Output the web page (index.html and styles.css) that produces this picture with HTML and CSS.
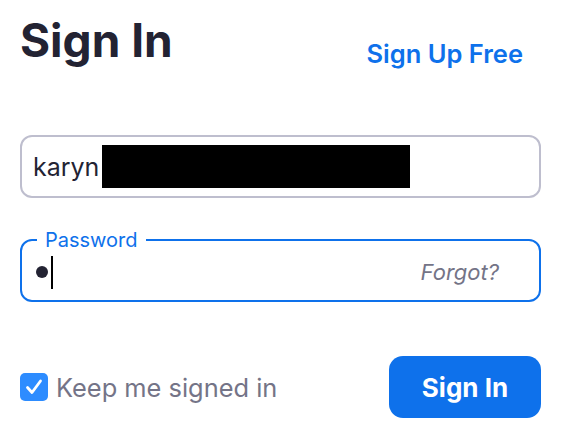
FILE: index.html
```html
<!DOCTYPE html>
<html lang="en">
<head>
    <meta charset="UTF-8">
    <meta name="viewport" content="width=device-width, initial-scale=1.0">
    <title>Sign In</title>
    <link rel="stylesheet" href="styles.css">
</head>
<body>

    <div class="signin">
        <div class="signin-header">
            <h1>Sign In</h1>
            <a href="#" class="signup-link">Sign Up Free</a>
        </div>

        <div class="text-field">
            <span class="field-value">karyn</span><span class="redacted"></span>
        </div>

        <fieldset class="password-field">
            <legend>Password</legend>
            <div class="password-row">
                <span class="pw-dot"></span><span class="caret"></span>
                <a href="#" class="forgot-link">Forgot?</a>
            </div>
        </fieldset>

        <div class="signin-footer">
            <label class="keep-signed">
                <span class="checkbox">
                    <svg width="20" height="20" viewBox="0 0 20 20">
                        <path d="M3.5 10.5 L8 15.5 L16.5 4" fill="none" stroke="#fff" stroke-width="2.8" stroke-linecap="round" stroke-linejoin="round"/>
                    </svg>
                </span>
                Keep me signed in
            </label>
            <button class="signin-btn">Sign In</button>
        </div>
    </div>

</body>
</html>
```

FILE: styles.css
```css
body{
    margin: 0;
    background: #fff;
    font-family: Inter, "Noto Sans", sans-serif;
}
.signin{
    width: 521px;
    padding: 12px 0 0 20px;
}
.signin-header{
    display: flex;
    justify-content: space-between;
    align-items: flex-start;
}
.signin-header h1{
    margin: 0;
    font-size: 46px;
    line-height: 56px;
    font-weight: 700;
    color: #232333;
}
.signup-link{
    margin-top: 27px;
    margin-right: 18px;
    font-size: 25.5px;
    line-height: 30px;
    font-weight: 600;
    color: #0E71EB;
    text-decoration: none;
}

.text-field{
    box-sizing: border-box;
    height: 63px;
    margin-top: 66px;
    padding: 0 11px;
    border: 2px solid #BEBECE;
    border-radius: 12px;
    display: flex;
    align-items: center;
    font-size: 25px;
    color: #232333;
}
.redacted{
    display: inline-block;
    width: 308px;
    height: 43px;
    margin-left: 3px;
    background: #000;
}

.password-field{
    margin: 32px 0 0;
    padding: 0 40px 6px 14px;
    border: 2px solid #0E71EB;
    border-radius: 12px;
}
.password-field legend{
    margin-left: 1px;
    padding: 0 8px;
    font-size: 20px;
    line-height: 20px;
    color: #0E71EB;
}
.password-row{
    height: 44px;
    display: flex;
    align-items: center;
}
.pw-dot{
    width: 12px;
    height: 12px;
    border-radius: 50%;
    background: #232333;
}
.caret{
    width: 2px;
    height: 33px;
    margin-left: 3px;
    background: #000;
}
.forgot-link{
    margin-left: auto;
    font-size: 22px;
    font-style: italic;
    color: #747487;
    text-decoration: none;
}

.signin-footer{
    margin-top: 54px;
    display: flex;
    justify-content: space-between;
    align-items: center;
}
.keep-signed{
    display: flex;
    align-items: center;
    gap: 8px;
    font-size: 25.4px;
    color: #747487;
}
.checkbox{
    width: 28px;
    height: 28px;
    border-radius: 5px;
    background: #2D8CFF;
    display: flex;
    align-items: center;
    justify-content: center;
}
.signin-btn{
    width: 152px;
    height: 62px;
    border: none;
    border-radius: 14px;
    background: #0E71EB;
    color: #fff;
    font-family: Inter, "Noto Sans", sans-serif;
    font-size: 26px;
    font-weight: 700;
}
```
